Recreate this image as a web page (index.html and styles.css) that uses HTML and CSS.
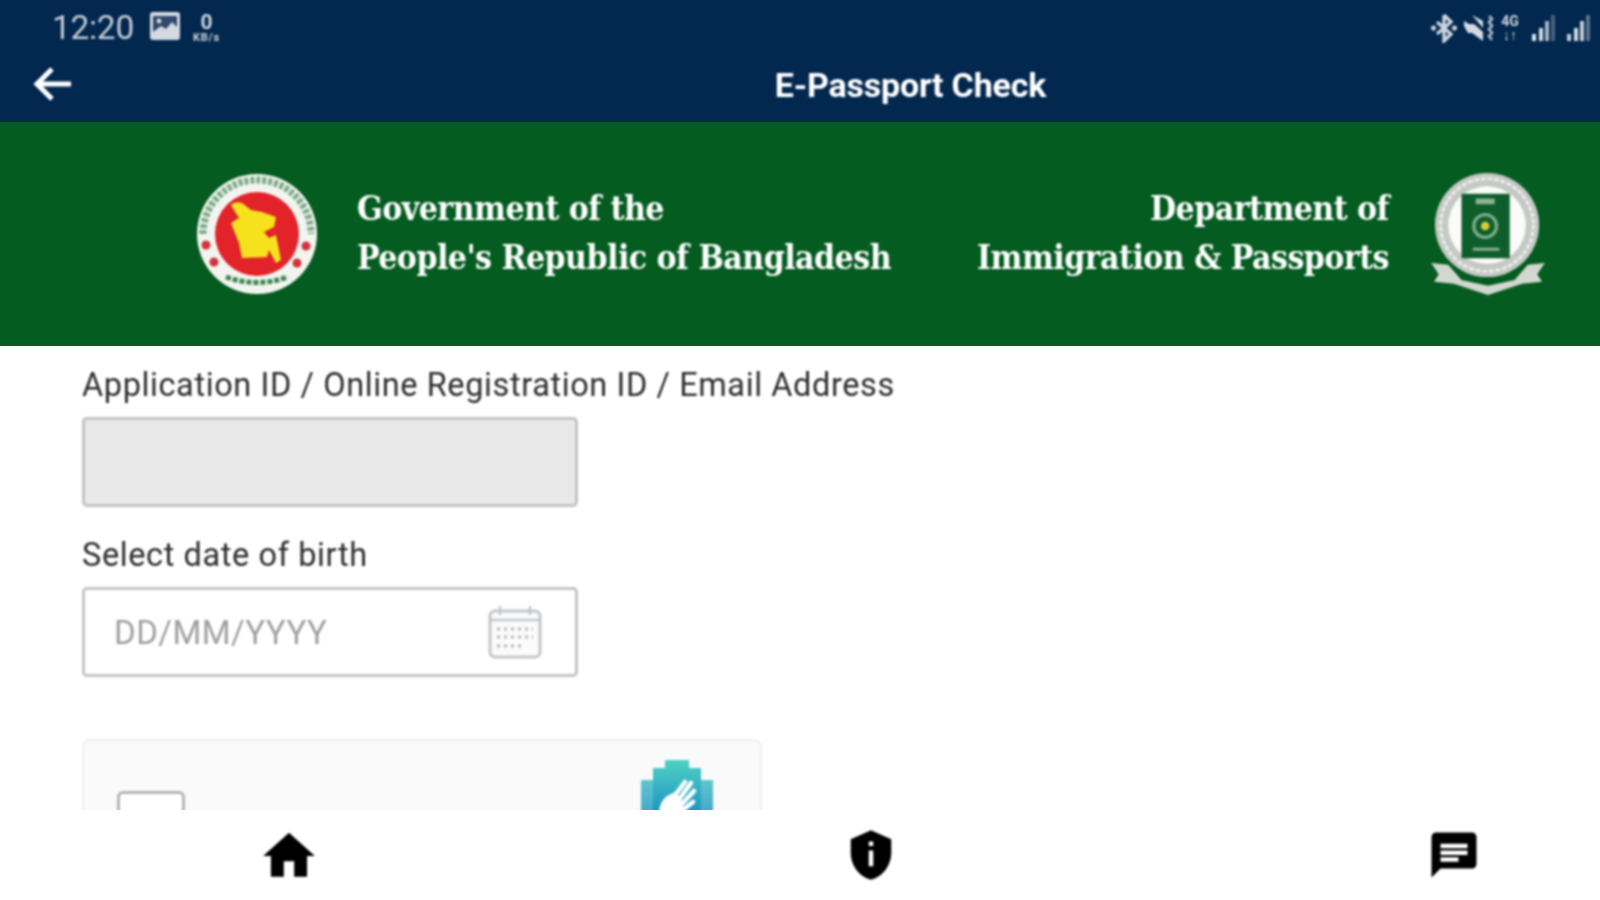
FILE: index.html
```html
<!DOCTYPE html>
<html lang="en">
<head>
<meta charset="utf-8">
<title>E-Passport Check</title>
<link rel="stylesheet" href="styles.css">
</head>
<body>
<div class="app">
  <header class="appbar">
    <div class="status">
      <div class="status-left">
        <span class="clock">12:20</span>
        <svg class="st-img" viewBox="0 0 30 28"><rect width="30" height="28" rx="3" fill="#d5dae2"/><rect x="3" y="4" width="24" height="16" fill="#33486b"/><path d="M3 20l8-6 5 3 6-7 5 5v5z" fill="#d5dae2"/><circle cx="9" cy="9" r="2.4" fill="#d5dae2"/></svg>
        <span class="speed"><b>0</b><i>KB/s</i></span>
      </div>
      <div class="status-right">
        <svg class="st-icon st-bt" viewBox="0 0 28 30"><path d="M14 2v26l7-7-14-12M14 2l7 7-14 12" fill="none" stroke="#cfd6e0" stroke-width="3.4"/><circle cx="3.500" cy="15" r="2.500" fill="#cfd6e0"/><circle cx="24.500" cy="15" r="2.500" fill="#cfd6e0"/></svg>
        <svg class="st-icon st-mute" viewBox="0 0 32 30"><path d="M1 8l5 3h5l9 8v9L9 20H5L1 13zM9 2l11 6v7z" fill="#d5dae2"/><path d="M26 3l3 3-3 3 3 4-3 3 3 4-3 3 3 4" fill="none" stroke="#aeb8c6" stroke-width="2.600"/></svg>
        <span class="st-net"><b>4G</b><b>↓↑</b></span>
        <svg class="st-icon st-sig" viewBox="0 0 26 30"><rect x="2" y="21" width="4" height="7" fill="#e0e4ea"/><rect x="9" y="15" width="4" height="13" fill="#d5dae2"/><rect x="15" y="8" width="4" height="20" fill="#aab4c4"/><rect x="21" y="2" width="4" height="26" fill="#4a607f"/></svg>
        <svg class="st-icon st-sig" viewBox="0 0 26 30"><rect x="2" y="21" width="4" height="7" fill="#c4ccd8"/><rect x="9" y="15" width="4" height="13" fill="#d5dae2"/><rect x="15" y="8" width="4" height="20" fill="#c4ccd8"/><rect x="21" y="2" width="4" height="26" fill="#5c7190"/></svg>
      </div>
    </div>
    <div class="toolbar">
      <svg class="back" viewBox="0 0 40 36"><path d="M38 18H5M19 3L4 18l15 15" fill="none" stroke="#fff" stroke-width="5"/></svg>
      <h1 class="title">E-Passport Check</h1>
    </div>
  </header>

  <section class="banner">
    <div class="gov">
      <svg class="seal" viewBox="0 0 124 124">
        <circle cx="61" cy="62" r="60" fill="#f2f5ef"/>
        <path d="M7 62a54 54 0 0 1 108 0" fill="none" stroke="#7dab8b" stroke-width="7" stroke-dasharray="4 2"/>
        <circle cx="61" cy="62" r="42" fill="#e2232a"/>
        <path d="M35 33q4-4 11-2l9 7 11 2 14 5-2 10-10 5 5 6 7-3 5 25-5 3-7-13-2 7-25 1-3-15-8-20 8-5-5-8z" fill="#f6e21c"/>
        <circle cx="10" cy="73" r="4.500" fill="#d3343c"/><circle cx="110" cy="74" r="4.500" fill="#d3343c"/>
        <circle cx="18" cy="90" r="4.500" fill="#d3343c"/><circle cx="101" cy="91" r="4.500" fill="#d3343c"/>
        <path d="M30 105q31 11 62 0" fill="none" stroke="#3c8453" stroke-width="5" stroke-dasharray="5 2"/>
      </svg>
      <p class="gov-text">Government of the<br>People's Republic of Bangladesh</p>
    </div>
    <div class="dept">
      <p class="dept-text">Department of<br>Immigration &amp; Passports</p>
      <svg class="seal-dip" viewBox="0 0 120 132">
        <path d="M0 96l18 2 14 16 28 6 28-6 14-16 18-2-8 12 5 8-21 2-36 12-36-12-21-2 5-8z" fill="#d3d7d1"/>
        <circle cx="59" cy="56" r="55" fill="#c5c9c5"/>
        <circle cx="59" cy="56" r="49" fill="none" stroke="#eef0ec" stroke-width="3" stroke-dasharray="5 2"/>
        <circle cx="59" cy="56" r="41" fill="#fbfbfa"/>
        <rect x="32" y="23" width="51" height="68" rx="1" fill="#0e5e2c"/>
        <circle cx="57" cy="57" r="12" fill="none" stroke="#7cab8a" stroke-width="3.500"/>
        <circle cx="57" cy="57" r="4.500" fill="#d9cc3a"/>
        <rect x="47" y="28" width="20" height="6" fill="#8fb398"/>
        <rect x="44" y="80" width="28" height="3" fill="#8fb398"/>
      </svg>
    </div>
  </section>

  <main class="content">
    <label class="field-label">Application ID / Online Registration ID / Email Address</label>
    <div class="input input-disabled"></div>
    <label class="field-label field-label-dob">Select date of birth</label>
    <div class="input input-date">
      <span class="placeholder">DD/MM/YYYY</span>
      <svg class="cal" viewBox="0 0 54 54">
        <rect x="2" y="6" width="50" height="46" rx="5" fill="#fbfbfb" stroke="#c3c6c9" stroke-width="3"/>
        <path d="M2 15h50M12 1v9M42 1v9" stroke="#c3c6c9" stroke-width="2.500" fill="none"/>
        <path d="M9 24h36M9 32h36M9 41h24" stroke="#b5b8bb" stroke-width="3" stroke-dasharray="3 4" fill="none"/>
      </svg>
    </div>
    <div class="captcha">
      <span class="check"></span>
      <svg class="cf-logo" viewBox="0 0 72 54">
        <defs><linearGradient id="cfg" x1="0" y1="0" x2="0" y2="1"><stop offset="0" stop-color="#4fd2c2"/><stop offset="1" stop-color="#1a93c4"/></linearGradient></defs>
        <path d="M24 0h24v8h12v12h12v34H0V20h12V8h12z" fill="url(#cfg)"/>
        <path d="M0 20h12v34H0zM60 20h12v34H60z" fill="#fff" opacity=".18"/>
        <path d="M18 54c0-8 3-14 8-18l8-4 6 6 4 16z" fill="#fff"/>
        <path d="M32 38l12-16M37 41l13-18M41 44l12-13M43 49l9-7" fill="none" stroke="#fff" stroke-width="4.500" stroke-linecap="round"/>
      </svg>
    </div>
  </main>

  <nav class="bottom-nav">
    <svg class="nav-icon nav-home" viewBox="0 0 24 24"><path d="M10 20v-6h4v6h5v-8h3L12 3 2 12h3v8z"/></svg>
    <svg class="nav-icon nav-info" viewBox="0 0 24 24"><path fill-rule="evenodd" d="M12 1L3 5v6c0 5.600 3.800 10.700 9 12 5.200-1.300 9-6.400 9-12V5zm-1 5h2v2h-2zm0 4h2v7h-2z"/></svg>
    <svg class="nav-icon nav-chat" viewBox="0 0 24 24"><path fill-rule="evenodd" d="M20 2H4c-1.100 0-2 .9-2 2v18l4-4h14c1.100 0 2-.9 2-2V4c0-1.100-.9-2-2-2zM6 9h12V7H6zm0 3h12v-2H6zm0 3h8v-2H6z"/></svg>
  </nav>
</div>
</body>
</html>
```
FILE: styles.css
```css
* { box-sizing: border-box; }
html, body { margin: 0; padding: 0; }
body { background: #fff; font-family: Roboto, "Liberation Sans", sans-serif; }
.app { width: 1600px; height: 900px; display: flex; flex-direction: column; overflow: hidden; }

/* the source is a soft, upscaled capture: everything but the section backgrounds is slightly out of focus */
.status-left, .status-right, .back, .title, .gov, .dept, .content > *, .nav-icon { filter: blur(0.9px); }

.appbar { height: 122px; background: #02284f; display: flex; flex-direction: column; flex: none; }
.status { height: 55px; display: flex; justify-content: space-between; align-items: center; padding: 0 9px 0 52px; }
.status-left, .status-right { display: flex; align-items: center; }
.clock { font-size: 33.5px; color: #c6ccd6; letter-spacing: -0.3px; }
.st-img { width: 30px; height: 28px; margin-left: 16px; margin-top: -4px; }
.speed { display: flex; flex-direction: column; align-items: center; margin-left: 13px; color: #cfd5de; line-height: 1; }
.speed b { font-size: 21px; font-weight: 700; line-height: 19px; }
.speed i { font-size: 11px; font-style: normal; font-weight: 700; letter-spacing: 0.8px; }
.st-icon { height: 30px; }
.st-bt { width: 28px; }
.st-mute { width: 32px; margin-left: 5px; }
.st-net { display: flex; flex-direction: column; margin-left: 4px; color: #cfd6e0; font-size: 14px; line-height: 14px; width: 22px; text-align: center; }
.st-net b { font-weight: 700; }
.st-sig { width: 26px; margin-left: 9px; }

.toolbar { flex: 1; position: relative; display: flex; align-items: center; justify-content: center; padding-bottom: 8px; }
.back { position: absolute; left: 33px; top: 11px; width: 40px; height: 36px; }
.title { margin: 0 0 0 221px; color: #fff; font-family: Roboto, sans-serif; font-size: 34px; font-weight: 700; letter-spacing: -0.2px; }

.banner { height: 224px; flex: none; background: #055c20; display: flex; justify-content: space-between; align-items: center; padding: 0 55px 0 196px; }
.gov, .dept { display: flex; align-items: center; }
.seal { width: 124px; height: 124px; flex: none; }
.seal-dip { width: 114px; height: 125px; flex: none; margin-left: 42px; }
.gov-text, .dept-text { margin: 0; color: #fff; font-family: "DejaVu Serif Condensed", "Liberation Serif", serif; font-weight: 700; font-size: 33.5px; line-height: 49px; padding-bottom: 3px; letter-spacing: -0.55px; }
.gov-text { margin-left: 37px; }
.dept-text { text-align: right; }

.content { flex: 1; min-height: 0; overflow: hidden; padding: 19px 0 0 82px; }
.field-label { display: block; font-size: 32.5px; line-height: 40px; color: #2e2e2e; letter-spacing: 0.6px; }
.input { width: 496px; height: 90px; margin-top: 12px; border: 3px solid #c2c4c6; border-radius: 5px; }
.input-disabled { background: #e9e9e9; }
.field-label-dob { margin-top: 28px; }
.input-date { display: flex; align-items: center; justify-content: space-between; padding: 0 33px 0 29px; margin-top: 12px; }
.placeholder { font-size: 33px; color: #a0a0a0; letter-spacing: 0.5px; }
.cal { width: 54px; height: 54px; }
.captcha { width: 680px; height: 120px; margin-top: 62px; background: #fafafa; border: 2px solid #efefef; border-radius: 8px; position: relative; }
.check { position: absolute; left: 33px; top: 50px; width: 68px; height: 68px; border: 3px solid #b5b5b5; border-radius: 6px; background: #fff; }
.cf-logo { position: absolute; left: 557px; top: 19px; width: 72px; height: 54px; }

.bottom-nav { height: 90px; flex: none; background: #fff; position: relative; display: block; }
.nav-icon { position: absolute; fill: #000; }
.nav-home { left: 258px; top: 15px; width: 62px; height: 62px; }
.nav-info { left: 844px; top: 18px; width: 54px; height: 54px; }
.nav-chat { left: 1427px; top: 18px; width: 54px; height: 54px; }
```
